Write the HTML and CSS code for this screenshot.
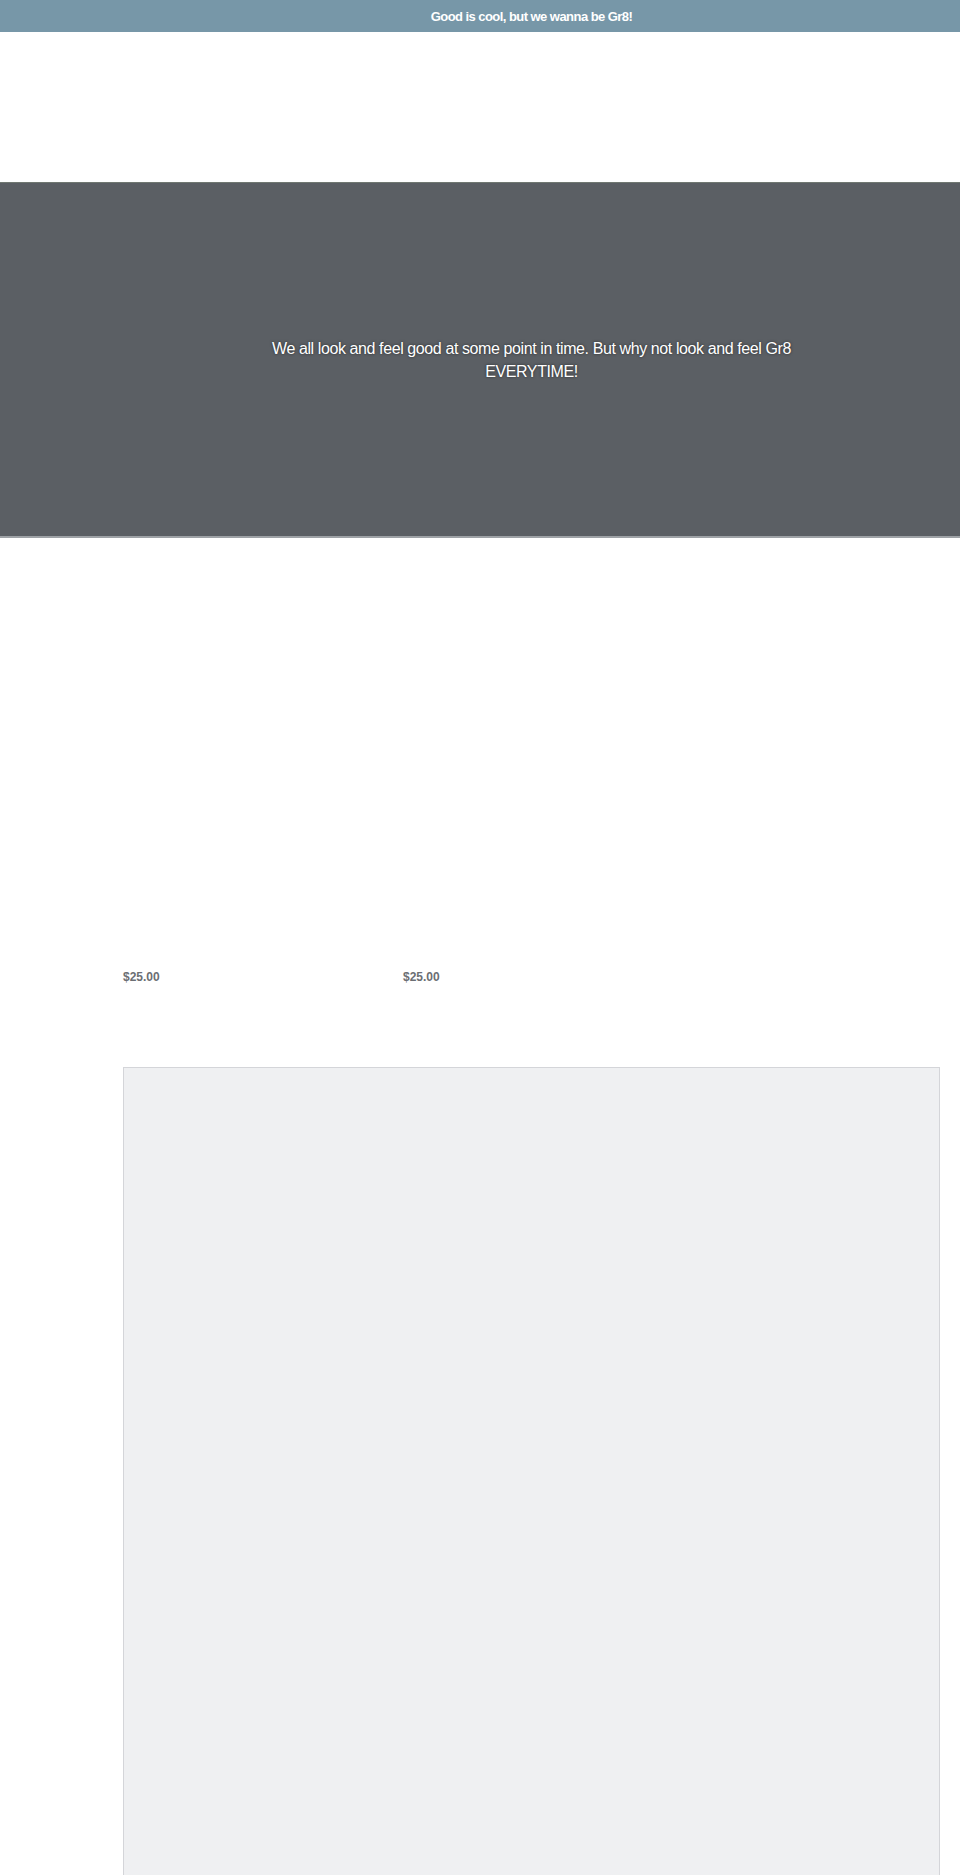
FILE: index.html
```html
<!DOCTYPE html>
<html>
<head>
<meta charset="utf-8">
<link rel="stylesheet" href="styles.css">
</head>
<body>
<div class="announce"><div class="inner"><p class="announce-text">Good is cool, but we wanna be Gr8!</p></div></div>
<header class="header"></header>
<section class="hero">
  <div class="inner hero-inner">
    <p class="hero-text">We all look and feel good at some point in time. But why not look and feel Gr8 EVERYTIME!</p>
  </div>
</section>
<section class="products inner">
  <div class="product"><div class="product-img"></div><p class="price">$25.00</p></div>
  <div class="product"><div class="product-img"></div><p class="price">$25.00</p></div>
</section>
<section class="inner">
  <div class="panel"></div>
</section>
</body>
</html>
```
FILE: styles.css
```css
* { box-sizing: border-box; }
html, body { margin: 0; padding: 0; }
body { font-family: "Liberation Sans", Arial, sans-serif; background: #fff; color: #333; }
.inner { padding-left: 123px; padding-right: 20px; }
.announce { background: #7797a8; height: 32px; }
.announce .inner { height: 32px; display: flex; align-items: center; justify-content: center; }
.announce-text { margin: 0; color: #fff; font-weight: bold; font-size: 13px; letter-spacing: -0.55px; }
.header { height: 150px; }
.hero { background: #5b5f64; height: 356px; border-top: 1px solid #707872; border-bottom: 2px solid #9ea2a6; }
.hero-inner { height: 100%; display: flex; align-items: center; justify-content: center; }
.hero-text { margin: 0; max-width: 540px; text-align: center; color: #fff; font-size: 16px; line-height: 23px; letter-spacing: -0.4px; text-shadow: 0 0 3px rgba(0,0,0,0.6); }
.products { display: flex; }
.product { width: 280px; }
.product-img { height: 432px; }
.price { margin: 0; height: 97px; color: #6b6e73; font-weight: bold; font-size: 12px; line-height: 14px; }
.panel { background: #eff0f2; border: 1px solid #d4d5d9; height: 820px; }
```
